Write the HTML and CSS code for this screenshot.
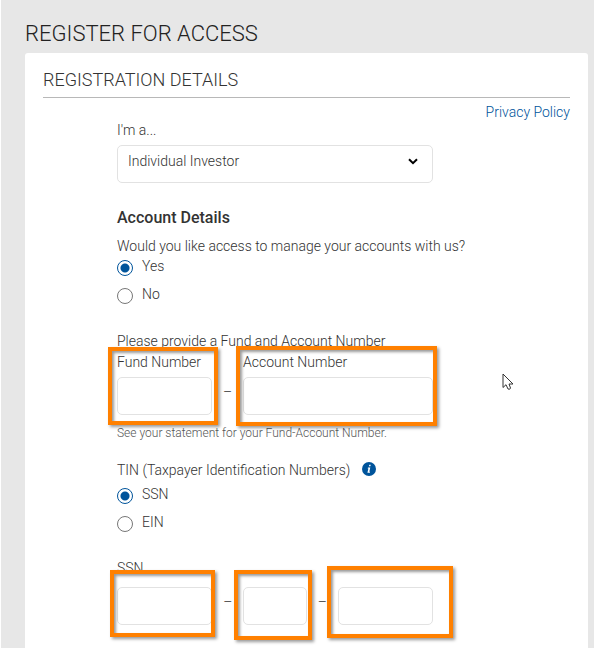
FILE: index.html
```html
<!DOCTYPE html>
<html lang="en">
<head>
<meta charset="utf-8">
<meta name="viewport" content="width=device-width, initial-scale=1">
<title>Register for Access</title>
<link rel="stylesheet" href="styles.css">
</head>
<body>
<main class="page">
  <h1 class="page-title">REGISTER FOR ACCESS</h1>
  <form class="card">
    <h2 class="card-title">REGISTRATION DETAILS</h2>
    <a class="privacy" href="#">Privacy Policy</a>
    <div class="form-body">
      <label for="role">I'm a...</label>
      <div class="select-box">
        <select id="role" class="control"><option>Individual Investor</option></select>
        <svg class="chevron" viewBox="0 0 10 7" aria-hidden="true"><path d="M1 1.2 5 5.2 9 1.2"/></svg>
      </div>

      <h3 class="section-title">Account Details</h3>
      <fieldset class="choices">
        <legend>Would you like access to manage your accounts with us?</legend>
        <label class="choice"><input type="radio" name="access" checked>Yes</label>
        <label class="choice"><input type="radio" name="access">No</label>
      </fieldset>

      <fieldset class="numbers">
        <legend>Please provide a Fund and Account Number</legend>
        <div class="row">
          <div class="field">
            <label for="fund">Fund Number</label>
            <input id="fund" class="control" type="text">
            <span class="mark mark-fund"></span>
          </div>
          <span class="dash">–</span>
          <div class="field field-double">
            <label for="account">Account Number</label>
            <input id="account" class="control" type="text">
            <span class="mark mark-account"></span>
          </div>
        </div>
        <p class="hint">See your statement for your Fund-Account Number.</p>
      </fieldset>

      <fieldset class="choices tin">
        <legend>TIN (Taxpayer Identification Numbers)
          <svg class="info" viewBox="0 0 14 14" role="img" aria-label="Information"><circle cx="7" cy="7" r="7"/><path d="M7.300 2.800h1.500l-.4 1.500H6.900zM6 5.400h2.300L7.300 9.700h.8l-.3 1H5.400l1-4.300h-.7z"/></svg>
        </legend>
        <label class="choice"><input type="radio" name="tin" checked>SSN</label>
        <label class="choice"><input type="radio" name="tin">EIN</label>
      </fieldset>

      <fieldset class="ssn">
        <legend>SSN</legend>
        <div class="row">
          <div class="field field-triple">
            <input class="control" type="text" aria-label="SSN first three digits">
            <span class="mark mark-ssn-a"></span>
          </div>
          <span class="dash">–</span>
          <div class="field field-double">
            <input class="control" type="text" aria-label="SSN middle two digits">
            <span class="mark mark-ssn-b"></span>
          </div>
          <span class="dash">–</span>
          <div class="field field-triple">
            <input class="control" type="text" aria-label="SSN last four digits">
            <span class="mark mark-ssn-c"></span>
          </div>
        </div>
      </fieldset>
    </div>
    <svg class="pointer" viewBox="0 0 12 18" aria-hidden="true"><path d="M1 1v13.500l3-2.800 2 4.300q2 1 2.500-1L7 11h4z"/></svg>
  </form>
</main>
</body>
</html>
```
FILE: styles.css
```css
* {
  box-sizing: border-box;
}

body {
  margin: 0 0 4px 1px;
  background: #fff;
  color: #333;
  font: 300 14px/20px Roboto, "Liberation Sans", sans-serif;
}

.page {
  padding: 20px 6px 0 24px;
  background: #e7e7e7;
}

h1, h2, h3, p, fieldset {
  margin: 0;
  padding: 0;
  border: 0;
  min-width: 0;
}

legend {
  display: block;
  padding: 0;
}

label {
  display: block;
}

.page-title {
  padding-bottom: 6px;
  color: #222;
  font-size: 22px;
  line-height: 27px;
  font-weight: 300;
}

.card {
  position: relative;
  padding: 15px 18px 23px;
  border-radius: 3px 3px 0 0;
  background: #fff;
}

.card-title {
  padding-bottom: 5px;
  border-bottom: 1px solid #b8b8b8;
  font-size: 18px;
  line-height: 24px;
  font-weight: 300;
}

.privacy {
  display: block;
  width: fit-content;
  margin: 4px 0 0 auto;
  color: #00549b;
  text-decoration: none;
}

.form-body {
  max-width: 390px;
  margin-top: -2px;
  padding-left: 74px;
}

.control {
  display: block;
  width: 100%;
  height: 38px;
  margin: 0;
  padding: 0 10px;
  border: 1px solid #e2e2e2;
  border-radius: 5px;
  background: #fff;
  color: inherit;
  font: inherit;
}

.select-box {
  position: relative;
  margin-top: 5px;
}

select.control {
  appearance: none;
  padding-bottom: 6px;
}

.chevron {
  position: absolute;
  top: 13px;
  right: 15px;
  width: 10px;
  height: 7px;
  fill: none;
  stroke: #000;
  stroke-width: 2;
  pointer-events: none;
}

.section-title {
  margin: 25px 0 8px;
  color: #333;
  font-size: 16px;
  line-height: 20px;
  font-weight: 500;
}

.choices legend {
  white-space: nowrap;
}

.choice {
  display: flex;
  gap: 9px;
  height: 28px;
}

.choice input {
  appearance: none;
  width: 16px;
  height: 16px;
  margin: 4px 0 0;
  border: 1px solid #777;
  border-radius: 50%;
}

.choice input:checked {
  border-color: #00549b;
  background: radial-gradient(circle, #00549b 4px, #fff 5px);
}

.numbers {
  margin-top: 19px;
}

.row {
  display: flex;
  align-items: flex-end;
}

.field {
  position: relative;
  flex: 1 1 0;
  min-width: 0;
}

.field label {
  padding: 1px 0 5px;
}

.field-double {
  flex-grow: 2;
}

.field-triple {
  flex-grow: 3;
}

.dash {
  width: 31px;
  padding-bottom: 13px;
  text-align: center;
}

.hint {
  margin-top: 8px;
  color: #555;
  font-size: 12px;
}

.tin {
  margin-top: 17px;
}

.tin legend {
  padding-bottom: 4px;
}

.info {
  width: 14px;
  height: 14px;
  margin-left: 8px;
  vertical-align: -1px;
  fill: #00549b;
}

.info path {
  fill: #fff;
}

.ssn {
  margin-top: 18px;
}

.ssn legend {
  padding-bottom: 9px;
}

.mark {
  position: absolute;
  border: 4px solid #ff8000;
  box-shadow: 2px 2px 3px #0006, inset 2px 2px 3px #0006;
  pointer-events: none;
}

.mark-fund {
  inset: -4px -6px -10px -9px;
}

.mark-account {
  inset: -5px -4px -11px -7px;
}

.mark-ssn-a {
  inset: -17px -3px -12px -7px;
}

.mark-ssn-b {
  inset: -17px -5px -15px -9px;
}

.mark-ssn-c {
  inset: -21px -20px -13px -11px;
}

.pointer {
  position: absolute;
  top: 320px;
  right: 74px;
  width: 12px;
  height: 18px;
  fill: #fff;
  stroke: #333;
}
```
